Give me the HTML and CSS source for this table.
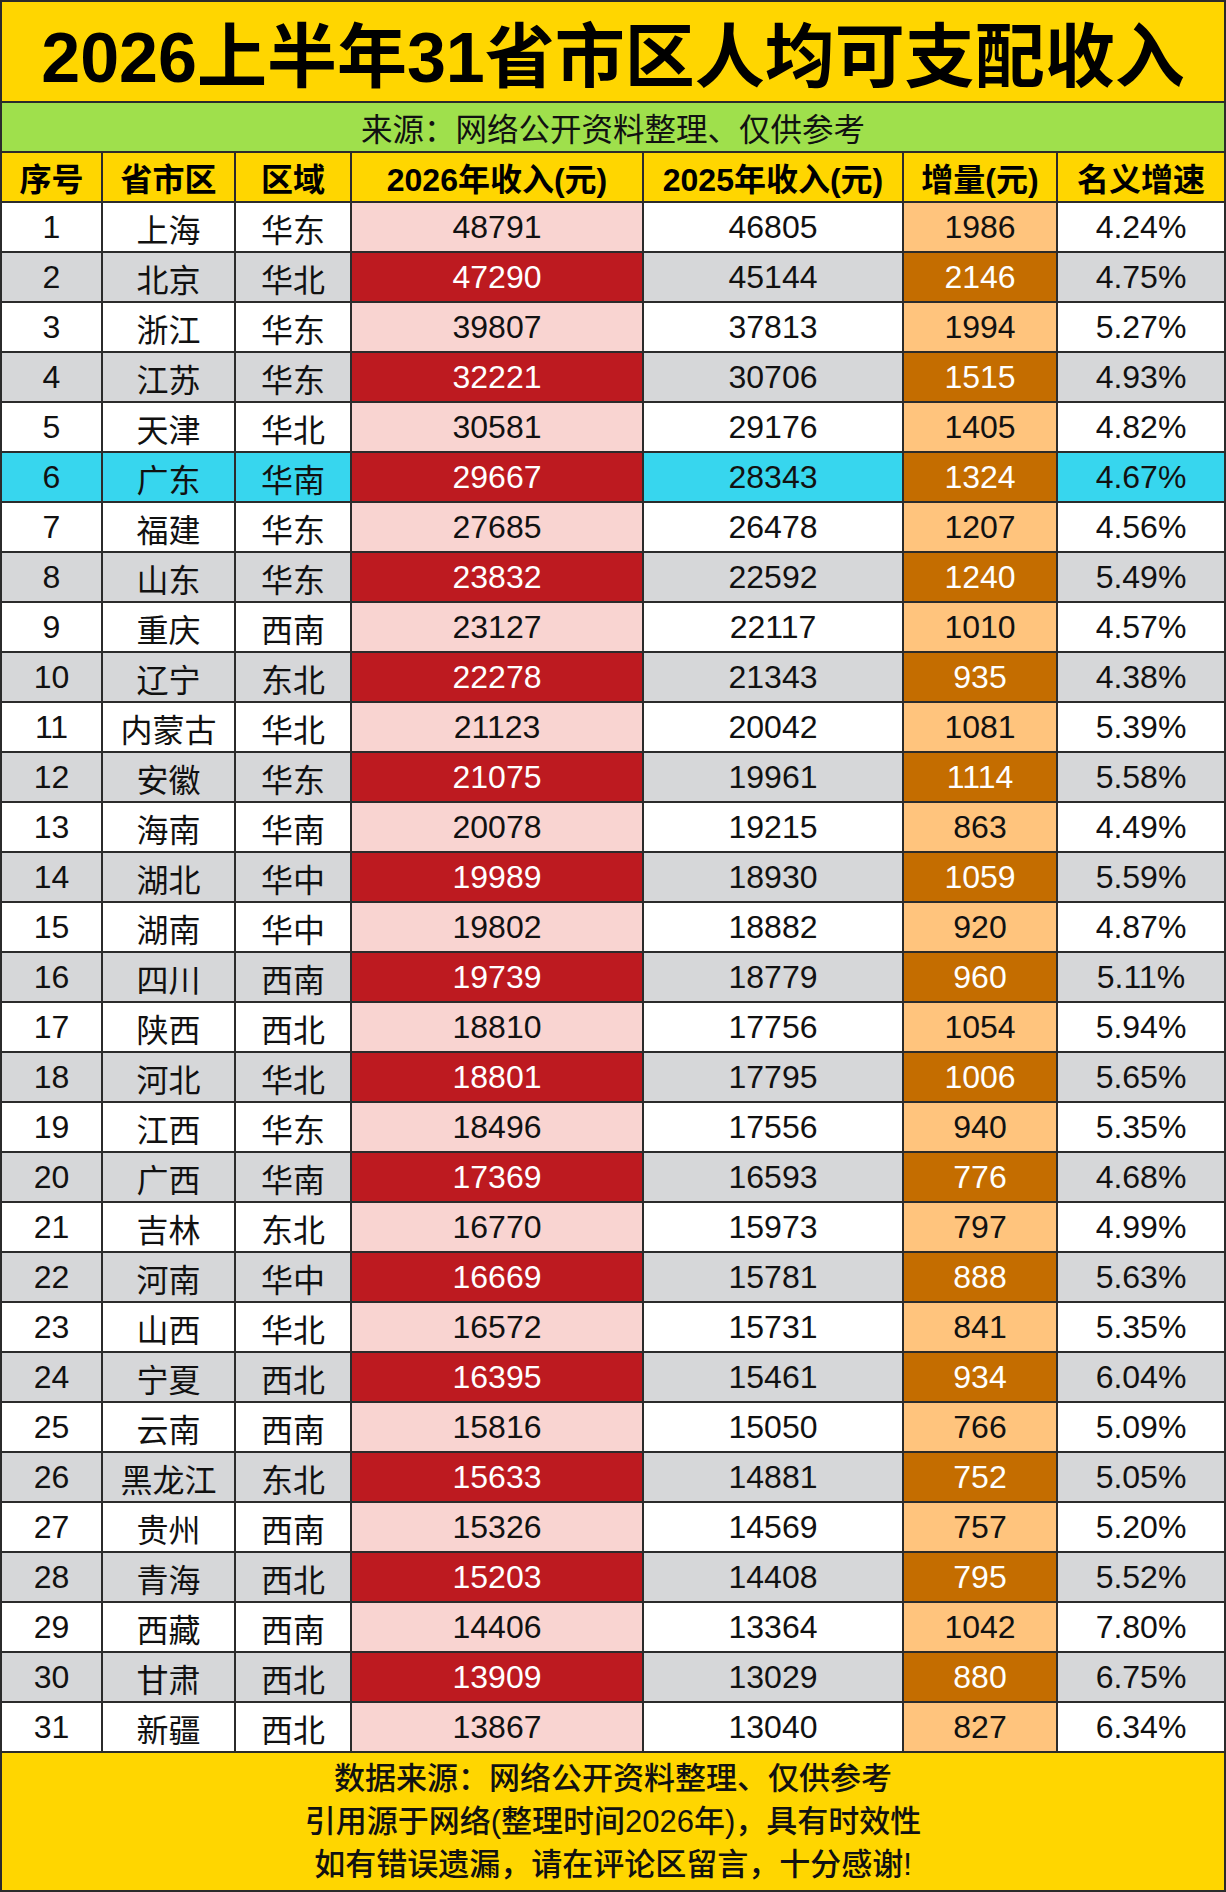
FILE: index.html
```html
<!DOCTYPE html>
<html lang="zh-CN">
<head>
<meta charset="utf-8">
<title>2026上半年31省市区人均可支配收入</title>
<link rel="stylesheet" href="styles.css">
</head>
<body>
<div class="sheet">
  <div class="title">2026上半年31省市区人均可支配收入</div>
  <div class="source">来源：网络公开资料整理、仅供参考</div>
  <div class="grid">
    <div class="hd">序号</div><div class="hd">省市区</div><div class="hd">区域</div><div class="hd">2026年收入(元)</div><div class="hd">2025年收入(元)</div><div class="hd">增量(元)</div><div class="hd">名义增速</div>

    <div class="c odd">1</div><div class="c odd">上海</div><div class="c odd">华东</div><div class="c pink">48791</div><div class="c odd">46805</div><div class="c lor">1986</div><div class="c odd">4.24%</div>
    <div class="c even">2</div><div class="c even">北京</div><div class="c even">华北</div><div class="c red">47290</div><div class="c even">45144</div><div class="c dor">2146</div><div class="c even">4.75%</div>
    <div class="c odd">3</div><div class="c odd">浙江</div><div class="c odd">华东</div><div class="c pink">39807</div><div class="c odd">37813</div><div class="c lor">1994</div><div class="c odd">5.27%</div>
    <div class="c even">4</div><div class="c even">江苏</div><div class="c even">华东</div><div class="c red">32221</div><div class="c even">30706</div><div class="c dor">1515</div><div class="c even">4.93%</div>
    <div class="c odd">5</div><div class="c odd">天津</div><div class="c odd">华北</div><div class="c pink">30581</div><div class="c odd">29176</div><div class="c lor">1405</div><div class="c odd">4.82%</div>
    <div class="c hl">6</div><div class="c hl">广东</div><div class="c hl">华南</div><div class="c red">29667</div><div class="c hl">28343</div><div class="c dor">1324</div><div class="c hl">4.67%</div>
    <div class="c odd">7</div><div class="c odd">福建</div><div class="c odd">华东</div><div class="c pink">27685</div><div class="c odd">26478</div><div class="c lor">1207</div><div class="c odd">4.56%</div>
    <div class="c even">8</div><div class="c even">山东</div><div class="c even">华东</div><div class="c red">23832</div><div class="c even">22592</div><div class="c dor">1240</div><div class="c even">5.49%</div>
    <div class="c odd">9</div><div class="c odd">重庆</div><div class="c odd">西南</div><div class="c pink">23127</div><div class="c odd">22117</div><div class="c lor">1010</div><div class="c odd">4.57%</div>
    <div class="c even">10</div><div class="c even">辽宁</div><div class="c even">东北</div><div class="c red">22278</div><div class="c even">21343</div><div class="c dor">935</div><div class="c even">4.38%</div>
    <div class="c odd">11</div><div class="c odd">内蒙古</div><div class="c odd">华北</div><div class="c pink">21123</div><div class="c odd">20042</div><div class="c lor">1081</div><div class="c odd">5.39%</div>
    <div class="c even">12</div><div class="c even">安徽</div><div class="c even">华东</div><div class="c red">21075</div><div class="c even">19961</div><div class="c dor">1114</div><div class="c even">5.58%</div>
    <div class="c odd">13</div><div class="c odd">海南</div><div class="c odd">华南</div><div class="c pink">20078</div><div class="c odd">19215</div><div class="c lor">863</div><div class="c odd">4.49%</div>
    <div class="c even">14</div><div class="c even">湖北</div><div class="c even">华中</div><div class="c red">19989</div><div class="c even">18930</div><div class="c dor">1059</div><div class="c even">5.59%</div>
    <div class="c odd">15</div><div class="c odd">湖南</div><div class="c odd">华中</div><div class="c pink">19802</div><div class="c odd">18882</div><div class="c lor">920</div><div class="c odd">4.87%</div>
    <div class="c even">16</div><div class="c even">四川</div><div class="c even">西南</div><div class="c red">19739</div><div class="c even">18779</div><div class="c dor">960</div><div class="c even">5.11%</div>
    <div class="c odd">17</div><div class="c odd">陕西</div><div class="c odd">西北</div><div class="c pink">18810</div><div class="c odd">17756</div><div class="c lor">1054</div><div class="c odd">5.94%</div>
    <div class="c even">18</div><div class="c even">河北</div><div class="c even">华北</div><div class="c red">18801</div><div class="c even">17795</div><div class="c dor">1006</div><div class="c even">5.65%</div>
    <div class="c odd">19</div><div class="c odd">江西</div><div class="c odd">华东</div><div class="c pink">18496</div><div class="c odd">17556</div><div class="c lor">940</div><div class="c odd">5.35%</div>
    <div class="c even">20</div><div class="c even">广西</div><div class="c even">华南</div><div class="c red">17369</div><div class="c even">16593</div><div class="c dor">776</div><div class="c even">4.68%</div>
    <div class="c odd">21</div><div class="c odd">吉林</div><div class="c odd">东北</div><div class="c pink">16770</div><div class="c odd">15973</div><div class="c lor">797</div><div class="c odd">4.99%</div>
    <div class="c even">22</div><div class="c even">河南</div><div class="c even">华中</div><div class="c red">16669</div><div class="c even">15781</div><div class="c dor">888</div><div class="c even">5.63%</div>
    <div class="c odd">23</div><div class="c odd">山西</div><div class="c odd">华北</div><div class="c pink">16572</div><div class="c odd">15731</div><div class="c lor">841</div><div class="c odd">5.35%</div>
    <div class="c even">24</div><div class="c even">宁夏</div><div class="c even">西北</div><div class="c red">16395</div><div class="c even">15461</div><div class="c dor">934</div><div class="c even">6.04%</div>
    <div class="c odd">25</div><div class="c odd">云南</div><div class="c odd">西南</div><div class="c pink">15816</div><div class="c odd">15050</div><div class="c lor">766</div><div class="c odd">5.09%</div>
    <div class="c even">26</div><div class="c even">黑龙江</div><div class="c even">东北</div><div class="c red">15633</div><div class="c even">14881</div><div class="c dor">752</div><div class="c even">5.05%</div>
    <div class="c odd">27</div><div class="c odd">贵州</div><div class="c odd">西南</div><div class="c pink">15326</div><div class="c odd">14569</div><div class="c lor">757</div><div class="c odd">5.20%</div>
    <div class="c even">28</div><div class="c even">青海</div><div class="c even">西北</div><div class="c red">15203</div><div class="c even">14408</div><div class="c dor">795</div><div class="c even">5.52%</div>
    <div class="c odd">29</div><div class="c odd">西藏</div><div class="c odd">西南</div><div class="c pink">14406</div><div class="c odd">13364</div><div class="c lor">1042</div><div class="c odd">7.80%</div>
    <div class="c even">30</div><div class="c even">甘肃</div><div class="c even">西北</div><div class="c red">13909</div><div class="c even">13029</div><div class="c dor">880</div><div class="c even">6.75%</div>
    <div class="c odd">31</div><div class="c odd">新疆</div><div class="c odd">西北</div><div class="c pink">13867</div><div class="c odd">13040</div><div class="c lor">827</div><div class="c odd">6.34%</div>
  </div>
  <div class="footer">
    <p>数据来源：网络公开资料整理、仅供参考</p>
    <p>引用源于网络(整理时间2026年)，具有时效性</p>
    <p>如有错误遗漏，请在评论区留言，十分感谢!</p>
  </div>
</div>
</body>
</html>
```

FILE: styles.css
```css
html, body {
  margin: 0;
  padding: 0;
  background: #ffffff;
}

body {
  font-family: "Liberation Sans", "Noto Sans CJK SC", sans-serif;
  color: #111111;
}

.sheet {
  width: 1226px;
  height: 1892px;
  box-sizing: border-box;
  background: #2b2b2b;
  padding: 2px;
  display: flex;
  flex-direction: column;
  gap: 2px;
}

.title {
  height: 99px;
  background: #ffd600;
  display: flex;
  align-items: center;
  justify-content: center;
  font-size: 70px;
  font-weight: 700;
  color: #000000;
}

.source {
  height: 48px;
  background: #9fe04c;
  display: flex;
  align-items: center;
  justify-content: center;
  font-size: 31.5px;
  color: #111111;
}

.grid {
  display: grid;
  grid-template-columns: 99px 131px 114px 290px 258px 152px 166px;
  grid-auto-rows: 48px;
  gap: 2px;
}

.hd {
  background: #ffd600;
  font-weight: 700;
  font-size: 32px;
  color: #000000;
  display: flex;
  align-items: center;
  justify-content: center;
  white-space: nowrap;
}

.c {
  display: flex;
  align-items: center;
  justify-content: center;
  font-size: 32px;
  white-space: nowrap;
  padding-top: 1px;
}

.odd { background: #ffffff; }
.even { background: #d6d7d9; }
.hl { background: #37d6ee; }
.pink { background: #f9d4d1; }
.red { background: #bd1a20; color: #ffffff; }
.lor { background: #ffc47d; }
.dor { background: #c46d00; color: #ffffff; }

.footer {
  flex: 1;
  background: #ffd600;
  display: flex;
  flex-direction: column;
  align-items: center;
  justify-content: center;
  font-size: 31px;
  font-weight: 500;
  color: #111111;
}

.footer p {
  margin: 0;
  line-height: 43px;
}
```
